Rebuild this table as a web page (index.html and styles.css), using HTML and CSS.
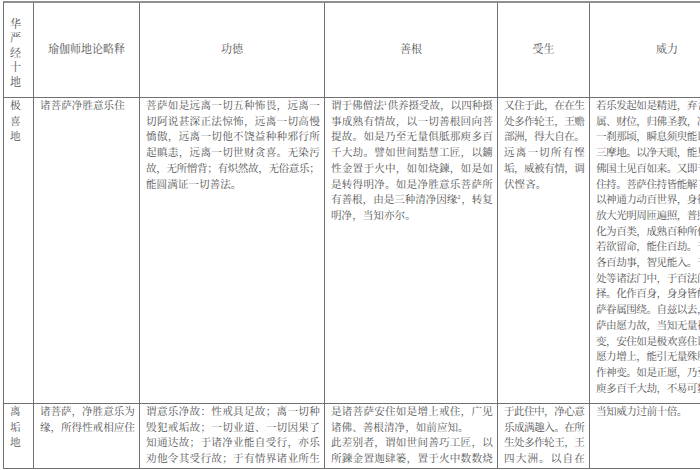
FILE: index.html
```html
<!DOCTYPE html>
<html lang="zh-CN">
<head>
<meta charset="utf-8">
<title>华严经十地 · 瑜伽师地论略释</title>
<link rel="stylesheet" href="styles.css">
</head>
<body>
<div class="page">
  <div class="sheet">
    <!-- header row -->
    <div class="c hd first"><span class="vt">华<br>严<br>经<br>十<br>地</span></div>
    <div class="c hd">瑜伽师地论略释</div>
    <div class="c hd">功德</div>
    <div class="c hd">善根</div>
    <div class="c hd">受生</div>
    <div class="c hd">威力</div>

    <!-- row 1 -->
    <div class="c col1">极<br>喜<br>地</div>
    <div class="c"><span class="ln e">诸菩萨净胜意乐住</span></div>
    <div class="c">
      <span class="ln">菩萨如是远离一切五种怖畏，远离一</span>
      <span class="ln">切阿说甚深正法惊怖，远离一切高慢</span>
      <span class="ln">憍傲，远离一切他不饶益种种邪行所</span>
      <span class="ln">起瞋恚，远离一切世财贪喜。无染污</span>
      <span class="ln">故，无所憎背；有炽然故，无俗意乐；</span>
      <span class="ln e">能圆满证一切善法。</span>
    </div>
    <div class="c">
      <span class="ln">谓于佛僧法<sup>1</sup>供养摄受故，以四种摄</span>
      <span class="ln">事成熟有情故，以一切善根回向菩</span>
      <span class="ln">提故。如是乃至无量俱胝那庾多百</span>
      <span class="ln">千大劫。譬如世间黠慧工匠，以鐪</span>
      <span class="ln">性金置于火中，如如烧鍊，如是如</span>
      <span class="ln">是转得明净。如是净胜意乐菩萨所</span>
      <span class="ln">有善根，由是三种清净因缘<sup>2</sup>，转复</span>
      <span class="ln e">明净，当知亦尔。</span>
    </div>
    <div class="c">
      <span class="ln">又住于此，在在生</span>
      <span class="ln">处多作轮王，王赡</span>
      <span class="ln">部洲，得大自在。</span>
      <span class="ln">远离一切所有悭</span>
      <span class="ln">垢，威被有情，调</span>
      <span class="ln e">伏悭吝。</span>
    </div>
    <div class="c">
      <span class="wl">若乐发起如是精进，弃舍家</span>
      <span class="wl">属、财位，归佛圣教，净信出家，于</span>
      <span class="wl">一刹那顷，瞬息须臾能证百</span>
      <span class="wl">三摩地。以净天眼，能见百佛，往百</span>
      <span class="wl">佛国土见百如来。又即于百佛</span>
      <span class="wl">住持。菩萨住持皆能解了。</span>
      <span class="wl">以神通力动百世界，身往百界，</span>
      <span class="wl">放大光明周匝遍照，普照百界，</span>
      <span class="wl">化为百类，成熟百种所化有情。</span>
      <span class="wl">若欲留命，能住百劫。于前后际</span>
      <span class="wl">各百劫事，智见能入。于百方便</span>
      <span class="wl">处等诸法门中，于百法门能正观</span>
      <span class="wl">择。化作百身，身身皆能示现百菩</span>
      <span class="wl">萨眷属围绕。自兹以去，若诸菩</span>
      <span class="wl">萨由愿力故，当知无量神</span>
      <span class="wl">变，安住如是极欢喜住诸大誓</span>
      <span class="wl">愿力增上，能引无量殊胜神力，示</span>
      <span class="wl">作神变。如是正愿，乃至无量俱胝那</span>
      <span class="wl">庾多百千大劫，不易可数。</span>
    </div>

    <!-- row 2 -->
    <div class="c col1">离<br>垢<br>地</div>
    <div class="c">
      <span class="ln">诸菩萨，净胜意乐为</span>
      <span class="ln">缘，所得性戒相应住</span>
    </div>
    <div class="c">
      <span class="ln">谓意乐净故：性戒具足故；离一切种</span>
      <span class="ln">毁犯戒垢故；一切业道、一切因果了</span>
      <span class="ln">知通达故；于诸净业能自受行，亦乐</span>
      <span class="ln">劝他令其受行故；于有情界诸业所生</span>
    </div>
    <div class="c">
      <span class="ln">是诸菩萨安住如是增上戒住，广见</span>
      <span class="ln e">诸佛、善根清净，如前应知。</span>
      <span class="ln">此差别者，谓如世间善巧工匠，以</span>
      <span class="ln">所鍊金置迦肆篓，置于火中数数烧</span>
    </div>
    <div class="c">
      <span class="ln">于此住中，净心意</span>
      <span class="ln">乐成满趣入。在所</span>
      <span class="ln">生处多作轮王，王</span>
      <span class="ln">四大洲。以自在</span>
    </div>
    <div class="c">
      <span class="wl">当知威力过前十倍。</span>
    </div>
  </div>
</div>
</body>
</html>
```

FILE: styles.css
```css
html, body {
  margin: 0;
  padding: 0;
  background: #ffffff;
}

body {
  font-family: "Liberation Serif", "Noto Serif CJK SC", "Noto Sans CJK SC", serif;
  font-size: 10.6px;
  line-height: 15.7px;
  color: #545454;
}

.page {
  width: 700px;
  height: 470px;
  overflow: hidden;
  box-sizing: border-box;
  padding: 1px 0 0 3px;
}

.sheet {
  display: grid;
  grid-template-columns: 30px 106px 185px 173px 92px 155px;
  grid-template-rows: 95px 306px 65px;
  width: max-content;
  border-top: 2px solid #8f8f8f;
  border-left: 1px solid #707070;
}

.c {
  border-right: 1px solid #707070;
  border-bottom: 1px solid #707070;
  padding: 0 5px 0 6px;
  overflow: hidden;
  min-width: 0;
}

.hd {
  display: flex;
  align-items: center;
  justify-content: center;
  padding: 0;
  font-size: 11px;
}

.hd.first {
  justify-content: flex-start;
  padding: 6px 0 0 6px;
}

.vt {
  display: block;
  line-height: 14.5px;
}

.col1 {
  padding-left: 6px;
  padding-right: 0;
}

.ln {
  display: block;
  white-space: nowrap;
  text-align: justify;
  text-align-last: justify;
  letter-spacing: -0.8px;
}

.ln.e {
  text-align-last: left;
  letter-spacing: 0;
}

.wl {
  display: block;
  white-space: nowrap;
  letter-spacing: -0.5px;
}

sup {
  font-size: 6px;
  line-height: 0;
  vertical-align: 4px;
  letter-spacing: 0;
}
```
